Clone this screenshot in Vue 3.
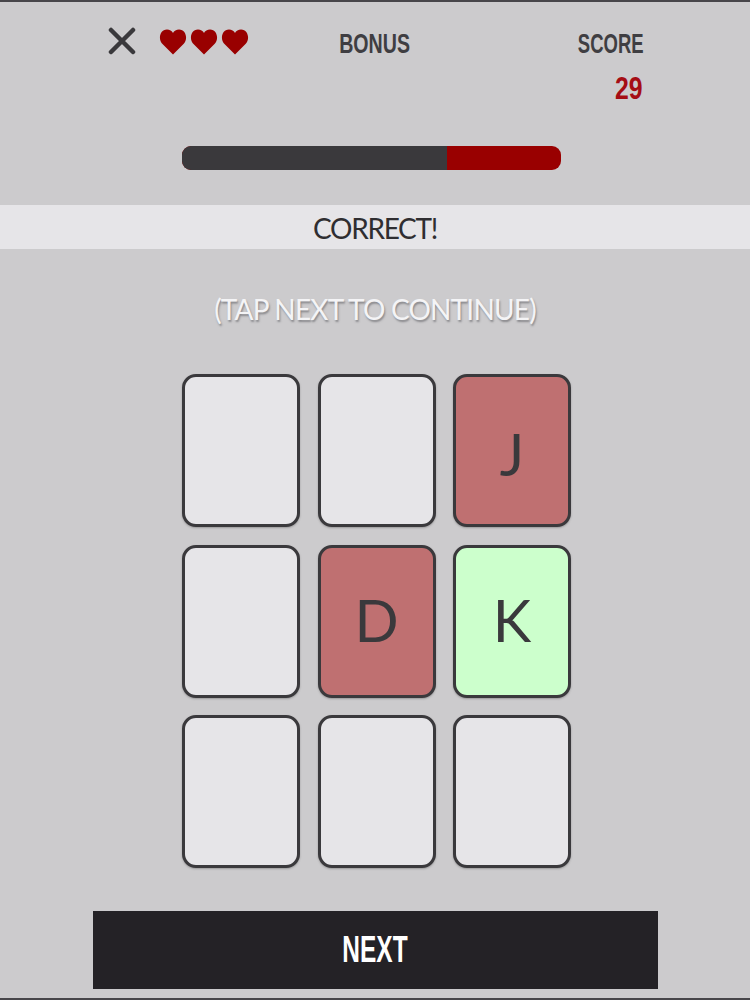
<template>
  <main class="screen">
    <header class="top">
      <svg class="close" viewBox="0 0 28 28" width="28" height="28">
        <path d="M3 3 L25 25 M25 3 L3 25" stroke="#3a393c" stroke-width="4.5" stroke-linecap="round" />
      </svg>
      <div class="hearts">
        <svg v-for="n in 3" :key="n" viewBox="0 0 28 26" width="28" height="26">
          <path
            d="M14 25.5 L3 14.5 C-0.8 10.5 0.5 0.5 8 0.5 C10.5 0.5 13 2 14 4 C15 2 17.5 0.5 20 0.5 C27.5 0.5 28.8 10.5 25 14.5 Z"
            fill="#990000"
          />
        </svg>
      </div>
      <div class="label bonus">BONUS</div>
      <div class="score">
        <div class="label score-label">SCORE</div>
        <div class="points">{{ score }}</div>
      </div>
    </header>

    <div class="bar">
      <div class="bar-fill" :style="{ width: barLeft + 'px' }"></div>
    </div>

    <div class="banner">CORRECT!</div>
    <p class="hint">(TAP NEXT TO CONTINUE)</p>

    <section class="cards">
      <div v-for="card in cards" :key="card.id" class="card" :class="card.state">
        <span :class="{ drop: card.letter === 'J' }">{{ card.letter }}</span>
      </div>
    </section>

    <button class="next"><span class="next-text">NEXT</span></button>
  </main>
</template>

<script setup>
const score = 29;
const barLeft = 265;

// the 3x3 board, read left to right
const cards = [
  { id: 0, letter: "", state: "" },
  { id: 1, letter: "", state: "" },
  { id: 2, letter: "J", state: "wrong" },
  { id: 3, letter: "", state: "" },
  { id: 4, letter: "D", state: "wrong" },
  { id: 5, letter: "K", state: "right" },
  { id: 6, letter: "", state: "" },
  { id: 7, letter: "", state: "" },
  { id: 8, letter: "", state: "" },
];
</script>

<style>
html,
body {
  margin: 0;
  background: #cccbcd;
}
</style>

<style scoped>
.screen {
  box-sizing: border-box;
  width: 750px;
  height: 1000px;
  background: #cccbcd;
  border-top: 2px solid #47464a;
  border-bottom: 2px solid #47464a;
  display: flex;
  flex-direction: column;
  align-items: center;
  font-family: "Lato", "Liberation Sans", sans-serif;
  color: #3a393c;
}

.top {
  box-sizing: border-box;
  width: 100%;
  height: 144px;
  padding: 25px 106px 0 108px;
  display: flex;
  align-items: flex-start;
}

.close {
  display: block;
}

.hearts {
  display: flex;
  gap: 3px;
  margin-left: 23px;
  margin-top: 2px;
}

/* no condensed family is installed, so the bold labels get squeezed */
.label {
  font-family: "Liberation Sans", sans-serif;
  font-weight: 700;
  font-size: 28px;
  line-height: 32px;
  margin-top: 1px;
  color: #3f3e42;
  white-space: nowrap;
  transform: scaleX(0.7);
}

.bonus {
  margin-left: 75px;
}

.score {
  margin-left: auto;
  text-align: right;
}

.score-label {
  transform: scaleX(0.66);
  transform-origin: right center;
}

.points {
  font-family: "Liberation Sans", sans-serif;
  font-weight: 700;
  font-size: 31px;
  line-height: 34px;
  margin-top: 12px;
  margin-right: 1px;
  color: #a50d14;
  transform: scaleX(0.8);
  transform-origin: right center;
}

.bar {
  width: 379px;
  height: 24px;
  margin-right: 7px;
  border-radius: 9px;
  background: #990000;
  overflow: hidden;
  flex: none;
}

.bar-fill {
  height: 100%;
  background: #3a393c;
}

.banner {
  width: 100%;
  height: 44px;
  margin-top: 35px;
  background: #e6e5e8;
  text-align: center;
  font-size: 28px;
  line-height: 46px;
  font-weight: 400;
  letter-spacing: -1.3px;
  color: #2f2e31;
  flex: none;
}

.hint {
  margin: 42px 0 0;
  font-size: 28px;
  line-height: 36px;
  font-weight: 400;
  letter-spacing: -0.8px;
  color: #f4f4f6;
  text-shadow: 1px 2px 2px rgba(90, 90, 95, 0.6);
  white-space: nowrap;
}

.cards {
  display: grid;
  grid-template-columns: repeat(3, 118px);
  grid-auto-rows: 153px;
  column-gap: 17.5px;
  row-gap: 17.5px;
  margin-top: 47px;
  margin-left: 3px;
}

.card {
  box-sizing: border-box;
  border: 3px solid #3a393c;
  border-radius: 14px;
  background: #e6e5e8;
  display: flex;
  align-items: center;
  justify-content: center;
  padding-bottom: 3px;
  font-size: 58px;
  font-weight: 400;
  color: #3a393c;
  box-shadow: 0 1px 2px rgba(60, 60, 60, 0.35);
}

.drop {
  padding-top: 8px;
}

.wrong {
  background: #bf7071;
}

.right {
  background: #ccffcc;
}

.next {
  display: block;
  width: 565px;
  height: 78px;
  margin-top: 43px;
  padding: 0;
  border: none;
  background: #242226;
  color: #ffffff;
  font-family: "Liberation Sans", sans-serif;
  font-weight: 700;
  font-size: 36px;
  flex: none;
}

.next-text {
  display: inline-block;
  transform: scaleX(0.68);
}
</style>
